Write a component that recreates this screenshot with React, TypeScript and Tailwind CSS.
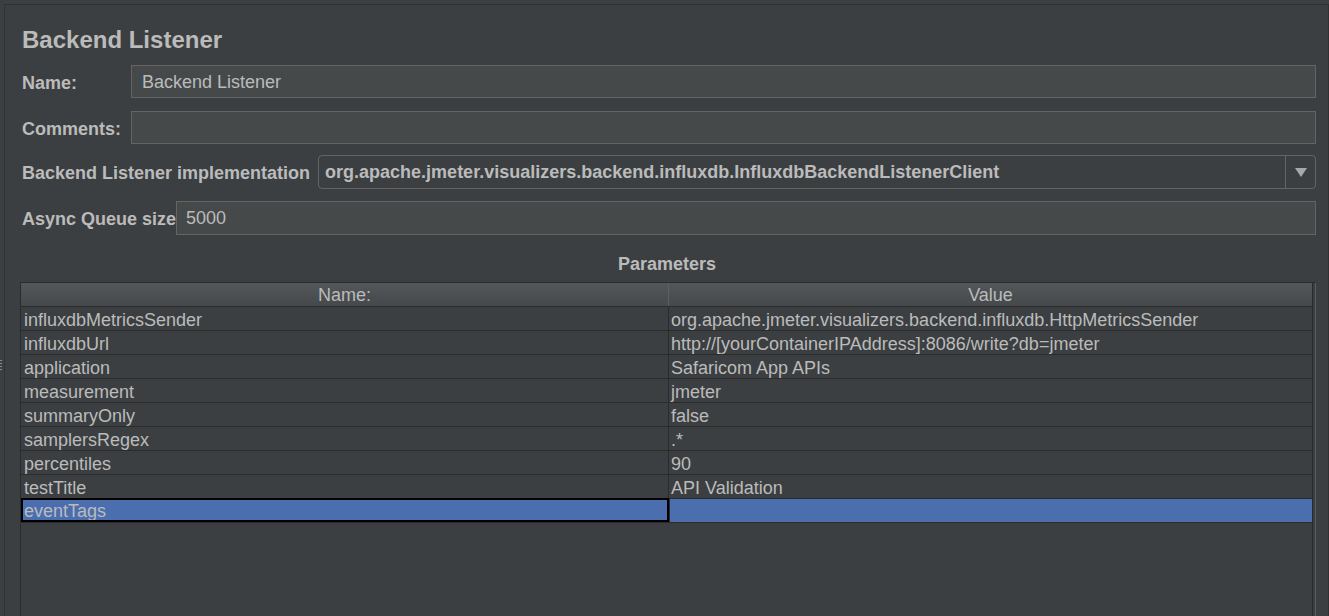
import React from 'react'

const rows: [string, string][] = [
  ['influxdbMetricsSender', 'org.apache.jmeter.visualizers.backend.influxdb.HttpMetricsSender'],
  ['influxdbUrl', 'http://[yourContainerIPAddress]:8086/write?db=jmeter'],
  ['application', 'Safaricom App APIs'],
  ['measurement', 'jmeter'],
  ['summaryOnly', 'false'],
  ['samplersRegex', '.*'],
  ['percentiles', '90'],
  ['testTitle', 'API Validation'],
]

function TextField({ value }: { value?: string }) {
  return (
    <div className="flex-1 h-[33px] bg-[#45494a] border border-[#646464] flex items-center pt-[2px] px-[10px] text-[18px] text-[#bbbbbb]">
      {value}
    </div>
  )
}

export default function App() {
  return (
    <div
      className="flex w-[1329px] h-[616px] overflow-hidden bg-[#3c3f41] text-[#bbbbbb]"
      style={{ fontFamily: '"Liberation Sans", Arial, sans-serif' }}
    >
      {/* splitter grip */}
      <div className="w-[4px] flex flex-col items-start pt-[360px] gap-[2px]">
        {[0, 1, 2, 3].map((i) => (
          <div key={i} className="w-[2px] h-[1px] bg-[#8a8d8f]" />
        ))}
      </div>

      <div className="flex-1 mt-[4px] border-l border-t border-r border-[#2f3133] flex flex-col pl-[17px] pr-[12px]">
        <h1 className="mt-[21px] text-[24px] leading-[28px] font-bold">Backend Listener</h1>

        <div className="mt-[11px] flex items-center">
          <div className="w-[109px] pt-[3px] text-[18px] font-bold">Name:</div>
          <TextField value="Backend Listener" />
        </div>

        <div className="mt-[13px] flex items-center">
          <div className="w-[109px] pt-[3px] text-[18px] font-bold">Comments:</div>
          <TextField />
        </div>

        <div className="mt-[11px] flex items-center">
          <div className="pt-[2px] text-[18px] font-bold pr-[8px]">Backend Listener implementation</div>
          <div className="flex-1 h-[34px] border border-[#646464] rounded-[4px] flex items-stretch">
            <div className="flex-1 flex items-center pt-[1px] px-[6px] text-[18px] font-bold whitespace-nowrap">
              org.apache.jmeter.visualizers.backend.influxdb.InfluxdbBackendListenerClient
            </div>
            <div className="w-[30px] border-l border-[#646464] flex items-center justify-center">
              <svg width="12" height="9" viewBox="0 0 12 9">
                <path d="M0 0 L12 0 L6 9 Z" fill="#a8a8a8" />
              </svg>
            </div>
          </div>
        </div>

        <div className="mt-[12px] flex items-center">
          <div className="pt-[2px] text-[18px] font-bold whitespace-nowrap">Async Queue size</div>
          <div className="flex-1 h-[34px] bg-[#45494a] border border-[#646464] flex items-center pt-[1px] px-[9px] text-[18px]">
            5000
          </div>
        </div>

        <div className="mt-[18px] text-center text-[18px] font-bold leading-[22px] pr-[4px]">Parameters</div>

        <div className="mt-[7px] -ml-[2px] flex-1 flex border-l border-t border-[#2b2b2b]">
          <div className="flex-1 flex flex-col border-r border-[#2b2b2b]">
            <div className="h-[24px] flex bg-gradient-to-b from-[#53575a] to-[#45494b] border-b border-[#2b2b2b] text-[18px] leading-[24px]">
              <div className="w-[648px] flex justify-center border-r border-[#5e6163]">Name:</div>
              <div className="flex-1 flex justify-center">Value</div>
            </div>
            {rows.map(([n, v]) => (
              <div key={n} className="h-[24px] flex border-b border-[#2b2b2b] text-[18px] leading-[26px] overflow-hidden">
                <div className="w-[648px] pl-[3px] border-r border-[#2b2b2b] whitespace-nowrap">{n}</div>
                <div className="flex-1 pl-[2px] whitespace-nowrap">{v}</div>
              </div>
            ))}
            <div className="h-[24px] flex border-b border-[#2b2b2b] bg-[#4b6eaf] text-[18px]">
              <div className="w-[648px] border-2 border-black pl-[1px] leading-[22px] -mt-[1px] overflow-hidden">eventTags</div>
              <div className="flex-1 border-l border-[#2b2b2b]" />
            </div>
          </div>
          <div className="w-[3px] border-r border-[#5c5f61]" />
        </div>
      </div>
    </div>
  )
}
